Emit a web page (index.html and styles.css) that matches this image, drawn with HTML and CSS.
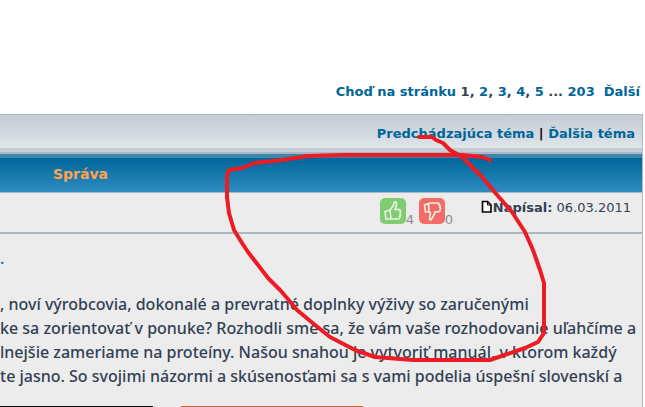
FILE: index.html
```
<!DOCTYPE html>
<html lang="sk">

<head>
    <meta charset="UTF-8">
    <meta name="viewport" content="width=device-width, initial-scale=1.0">
    <title>Téma</title>
    <link rel="stylesheet" href="styles.css">
</head>

<body>
    <nav class="pagination">
        <a href="#">Choď na stránku</a>
        <b>1</b>, <a href="#">2</a>, <a href="#">3</a>, <a href="#">4</a>, <a href="#">5</a> ... <a href="#">203</a>&nbsp; <a href="#">Ďalší</a>
    </nav>

    <main class="topic">
        <div class="catbar">
            <a href="#">Predchádzajúca téma</a> | <a href="#">Ďalšia téma</a>
        </div>
        <h2 class="topic-head">Správa</h2>

        <div class="post-info">
            <div class="votes">
                <button class="vote vote-up" aria-label="Páči sa mi">
                    <svg width="26" height="26" viewBox="0 0 26 26">
                        <path d="M5 13.500l5-1.500c2-2 3.500-3.500 4-7 .2-1.500 2.200-1.500 2.500 0 .3 2-.5 4-1.500 6.500h4c1.500 0 1.800 1.500 1 2.200 1 .8.800 2 0 2.500.8 1 .4 2-.4 2.300.3 1.500 0 2.500-1.600 2.500H6zM10 12l1 8.500"/>
                    </svg>
                </button>
                <span class="count">4</span>
                <button class="vote vote-down" aria-label="Nepáči sa mi">
                    <svg width="26" height="26" viewBox="0 0 26 26">
                        <path d="M5.500 7l4-1.500 3-.5h6c1.500 0 2 1 1.500 2 1.300.4 1.500 1.500.8 2.300 1 .6 1 1.800 0 2.500.6 1 .2 2-1.300 2l-3.500.2c-.5 2.500-2 4.500-3.500 7.200-.8 1.200-2.200.5-2-.8l1-5.400-2-1.500-3 .5zM9.500 5.500l.5 8"/>
                    </svg>
                </button>
                <span class="count">0</span>
            </div>
            <div class="posted">
                <svg width="12" height="14" viewBox="0 0 12 14">
                    <path d="M1.500 1.500h5l3.500 3.500v7h-8.500z" fill="#fff" stroke="#000" stroke-width="1.600"/>
                    <path d="M6.500 1.500V5H10" fill="none" stroke="#000"/>
                </svg><b>Napísal:</b> 06.03.2011
            </div>
        </div>

        <article class="post">
            <p class="lead">.</p>
            <p>, noví výrobcovia, dokonalé a prevratné doplnky výživy so zaručenými<br>
            ke sa zorientovať v ponuke? Rozhodli sme sa, že vám vaše rozhodovanie uľahčíme a<br>
            lnejšie zameriame na proteíny. Našou snahou je vytvoriť manuál, v ktorom každý<br>
            te jasno. So svojimi názormi a skúsenosťami sa s vami podelia úspešní slovenskí a</p>
            <div class="photos">
                <span class="photo photo-dark"></span>
                <span class="photo photo-orange"></span>
            </div>
        </article>
    </main>

    <svg class="marker" width="645" height="407" viewBox="0 0 645 407">
        <polyline points="419,137 432,137 436,140 443,143 450,150 462,157 482,177 498,196 512,212 525,232 533,250 540,270 544,283 544,333 538,342 525,348 490,360 413,360 375,357 355,350 330,337 315,325 297,310 287,298 280,290 268,278 248,252 242,243 234,230 229,213 227,197 227,175 229,170 242,168 255,163 282,160 308,156 342,155 462,155 482,157 490,160"/>
    </svg>
</body>

</html>
```
FILE: styles.css
```
body {
    margin: 0;
    background-color: #fff;
    color: #333f53;
    font-family: Verdana, "DejaVu Sans", sans-serif;
    font-size: 13px;
}
a {
    color: #006699;
    text-decoration: none;
}
a:hover {
    text-decoration: underline;
}
.pagination {
    padding: 82px 5px 12px;
    font-weight: bold;
    line-height: 20px;
    text-align: right;
}
.topic {
    margin-right: 2px;
    border-top: 1px solid #a9b8c2;
    border-right: 1px solid #a9b8c2;
    background-color: #ececec;
}
.catbar {
    padding: 9px 7px 4px;
    border-bottom: 4px solid #c5ced5;
    background: linear-gradient(#c6cdd6, #d3d9e1 60%, #e1e6e8);
    color: #000;
    font-weight: bold;
    line-height: 20px;
    text-align: right;
}
.topic-head {
    margin: 0;
    padding: 6px 53px 4px;
    border-top: 2px solid #a9b8c2;
    border-bottom: 1px solid #a9b8c2;
    background: linear-gradient(#3d87af 4px, #00669b 4px, #2e8bbf);
    color: #ffa34f;
    font-size: 14px;
    line-height: 28px;
}
.post-info {
    display: flex;
    justify-content: flex-end;
    gap: 23px;
    padding: 5px 11px 4px;
    border-bottom: 2px solid #a9b8c2;
}
.votes {
    display: flex;
    align-items: flex-end;
    height: 30px;
}
.vote {
    width: 26px;
    height: 26px;
    margin-bottom: 4px;
    padding: 0;
    border: none;
    border-radius: 5px;
    cursor: pointer;
}
.vote svg {
    display: block;
    fill: none;
    stroke: #e8f5e5;
    stroke-width: 1.6;
}
.vote-up {
    background-color: #80cc70;
}
.vote-down {
    background-color: #f36c68;
}
.count {
    width: 13px;
    color: #858c98;
    line-height: 16px;
}
.posted {
    line-height: 20px;
}
.posted svg {
    vertical-align: -2px;
}
.post {
    font-family: "Trebuchet MS", "Noto Sans", sans-serif;
    font-size: 16px;
    font-weight: 500;
    line-height: 24px;
    white-space: nowrap;
}
.post p {
    margin: 0 0 18px;
}
.post .lead {
    margin: 0;
    padding: 12px 0 22px;
    color: #006699;
}
.photos {
    display: flex;
    gap: 28px;
}
.photo {
    height: 1px;
}
.photo-dark {
    width: 153px;
    background-color: #0c0805;
}
.photo-orange {
    width: 182px;
    background-color: #c96330;
}
.marker {
    position: absolute;
    top: 0;
    left: 0;
    pointer-events: none;
    fill: none;
    stroke: #ed1c24;
    stroke-width: 4;
    stroke-linejoin: round;
    stroke-linecap: round;
}
```
